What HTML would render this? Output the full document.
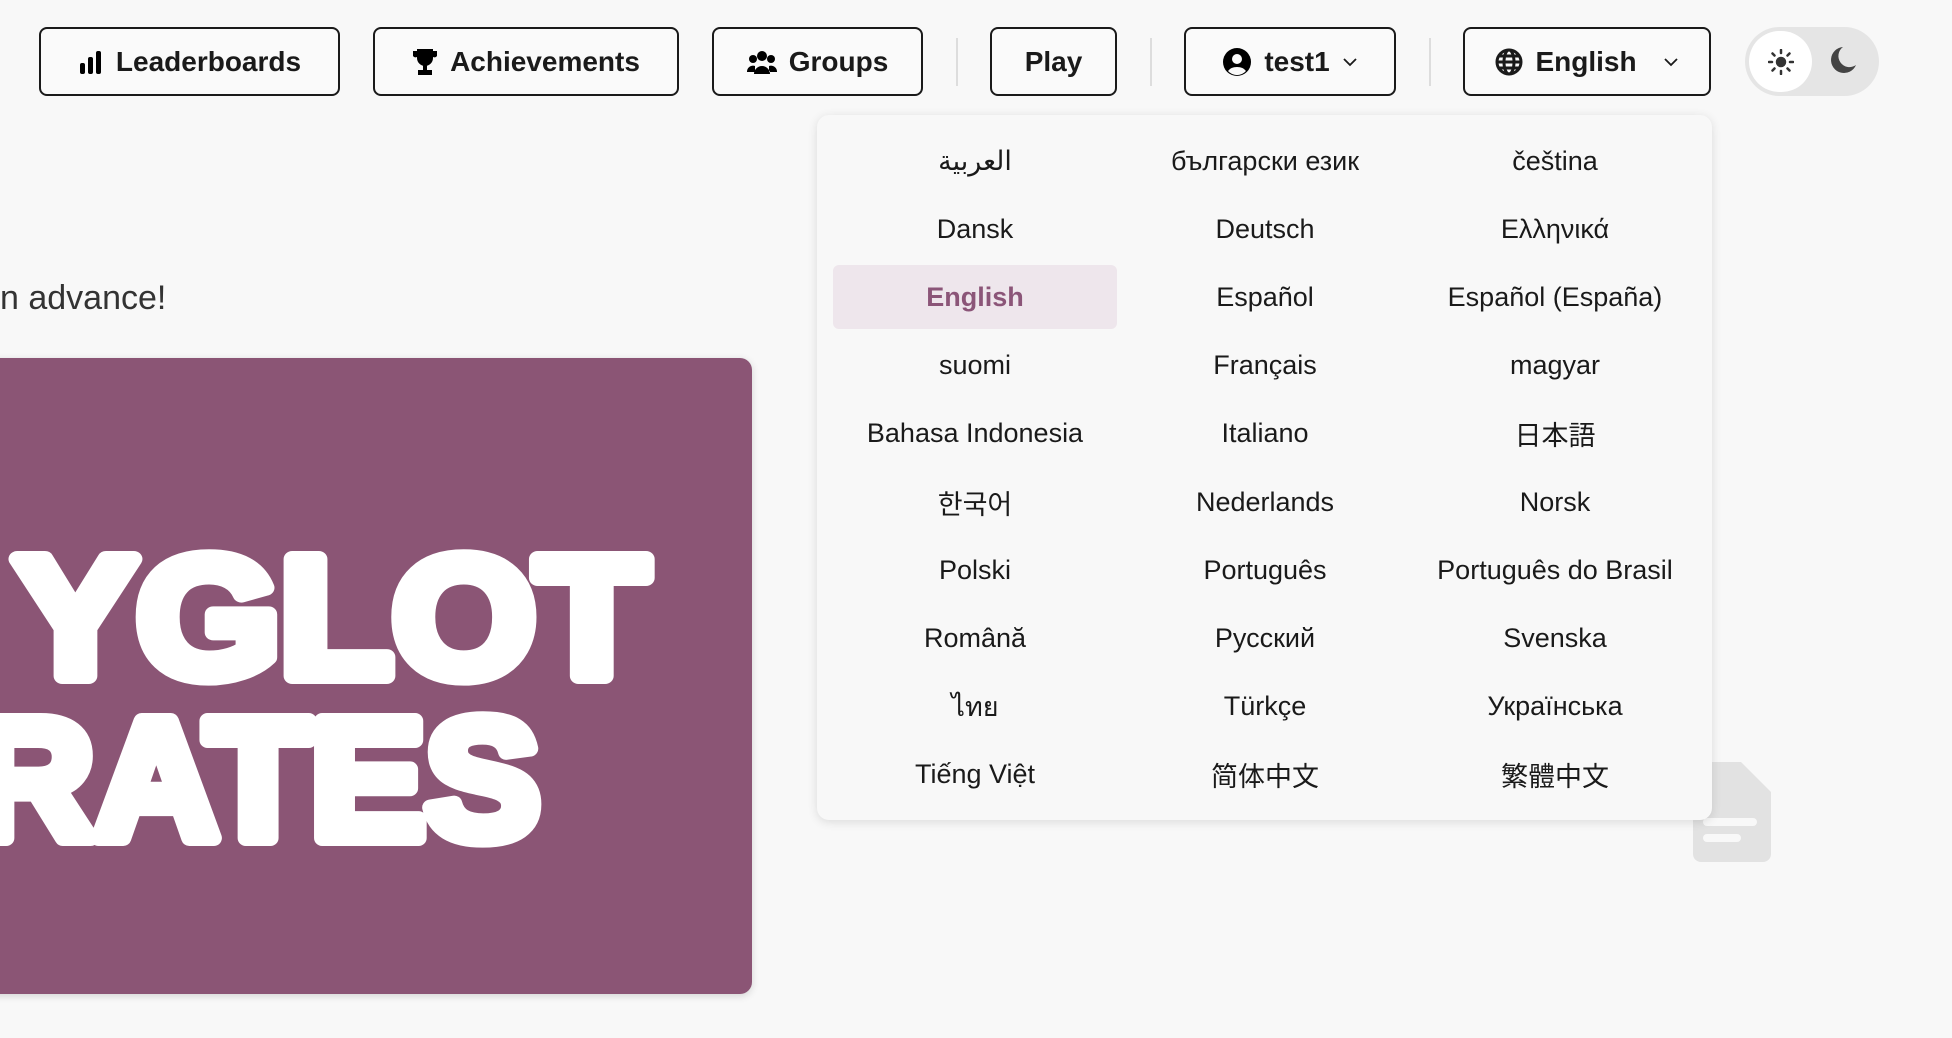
<!DOCTYPE html>
<html><head><meta charset="utf-8">
<style>
*{box-sizing:border-box;margin:0;padding:0}
body{width:1952px;height:1038px;background:#f8f8f8;font-family:"Liberation Sans","Noto Sans CJK JP",sans-serif;color:#1a1a1a;position:relative;overflow:hidden}
.btn{position:absolute;top:27px;height:69px;border:2.5px solid #1a1a1a;border-radius:8px;display:flex;align-items:center;justify-content:center;gap:12px;font-weight:bold;font-size:28px;background:#fafafa}
.sep{position:absolute;top:38px;width:2px;height:48px;background:#ddd}
.menu{position:absolute;left:817px;top:115px;width:895px;height:705px;background:#f8f8f8;border-radius:12px;box-shadow:0 2px 10px rgba(0,0,0,.12)}
.item{position:absolute;width:284px;height:64px;display:flex;align-items:center;justify-content:center;font-size:27px;color:#1a1a1a}
.sel{background:#eee6ec;color:#8b5578;font-weight:bold;border-radius:6px}
</style></head><body>
<div class="btn" style="left:39px;width:301px"><svg width="26" height="24" viewBox="0 0 26 24"><rect x="2" y="13" width="5" height="11" rx="2"/><rect x="10" y="7" width="5" height="17" rx="2"/><rect x="18" y="1" width="5" height="23" rx="2"/></svg>Leaderboards</div>
<div class="btn" style="left:373px;width:306px"><svg width="26" height="28" viewBox="0 0 26 28"><path d="M5 1h16v9a8 8 0 0 1-16 0z M1 3h5v5a3 3 0 0 1-5 0z M20 3h5v5a3 3 0 0 1-5 0z M11 17h4v5h-4z M6 22h14v5H6z"/></svg>Achievements</div>
<div class="btn" style="left:712px;width:211px"><svg width="30" height="24" viewBox="0 0 30 24"><circle cx="15" cy="6" r="5"/><circle cx="6" cy="9" r="4"/><circle cx="24" cy="9" r="4"/><path d="M7 24a8 8 0 0 1 16 0z M0 22a6 6 0 0 1 8-6v6z M30 22a6 6 0 0 0-8-6v6z"/></svg>Groups</div>
<div class="sep" style="left:956px"></div>
<div class="btn" style="left:990px;width:127px">Play</div>
<div class="sep" style="left:1150px"></div>
<div class="btn" style="left:1184px;width:212px"><svg width="30" height="30" viewBox="0 0 30 30"><circle cx="15" cy="15" r="14"/><circle cx="15" cy="12" r="5" fill="#fafafa"/><path d="M6 24a10 7 0 0 1 18 0a12 12 0 0 1-18 0z" fill="#fafafa"/></svg>test1<svg width="16" height="10" viewBox="0 0 16 10" fill="none" stroke="#1a1a1a" stroke-width="1.8"><path d="M2 2l6 6 6-6"/></svg></div>
<div class="sep" style="left:1429px"></div>
<div class="btn" style="left:1463px;width:248px"><svg width="28" height="28" viewBox="0 0 28 28" fill="none" stroke="#1a1a1a" stroke-width="3"><circle cx="14" cy="14" r="12"/><ellipse cx="14" cy="14" rx="5" ry="12"/><path d="M2 14h24M4 8h20M4 20h20"/></svg>English<svg style="margin-left:14px" width="16" height="10" viewBox="0 0 16 10" fill="none" stroke="#1a1a1a" stroke-width="1.8"><path d="M2 2l6 6 6-6"/></svg></div>
<div style="position:absolute;left:1745px;top:27px;width:134px;height:69px;border-radius:35px;background:#e5e5e5">
<div style="position:absolute;left:4px;top:4px;width:63px;height:61px;border-radius:31px;background:#fff;display:flex;align-items:center;justify-content:center"><svg width="26" height="26" viewBox="0 0 26 26" stroke="#333" stroke-width="2.5" stroke-linecap="round"><circle cx="13" cy="13" r="4" fill="#333"/><path d="M13 1v3M13 22v3M1 13h3M22 13h3M4.5 4.5l2 2M19.5 19.5l2 2M4.5 21.5l2-2M19.5 6.5l2-2"/></svg></div>
<svg style="position:absolute;left:84px;top:19px" width="28" height="30" viewBox="0 0 28 30"><path d="M14 1a13 13 0 1 0 13 18a11 11 0 0 1-13-18z" fill="#444"/></svg>
</div>
<div style="position:absolute;left:0;top:279px;font-size:34px;color:#333">n advance!</div>
<div style="position:absolute;left:-20px;top:358px;width:772px;height:636px;background:#8b5575;border-radius:12px;box-shadow:0 2px 8px rgba(0,0,0,.15)"></div>
<svg style="position:absolute;left:0;top:358px" width="752" height="636"><g fill="#fff" stroke="#fff" stroke-width="16" stroke-linejoin="round" font-family="Liberation Sans" font-weight="bold" font-size="170"><text x="14" y="318" textLength="634" lengthAdjust="spacingAndGlyphs">YGLOT</text><text x="-30" y="480" textLength="570" lengthAdjust="spacingAndGlyphs">RATES</text></g></svg>
<svg style="position:absolute;left:1693px;top:762px" width="78" height="100" viewBox="0 0 78 100"><path d="M8 0h40l30 30v62a8 8 0 0 1-8 8H8a8 8 0 0 1-8-8V8a8 8 0 0 1 8-8z" fill="#e2e2e2"/><path d="M14 60h46M14 76h30" stroke="#f8f8f8" stroke-width="8" stroke-linecap="round"/></svg>
<div class="menu"></div>
<div id="m"></div>
<script>
var L=["العربية","български език","čeština","Dansk","Deutsch","Ελληνικά","English","Español","Español (España)","suomi","Français","magyar","Bahasa Indonesia","Italiano","日本語","한국어","Nederlands","Norsk","Polski","Português","Português do Brasil","Română","Русский","Svenska","ไทย","Türkçe","Українська","Tiếng Việt","简体中文","繁體中文"];
var h="";L.forEach(function(t,i){var r=Math.floor(i/3),c=i%3;h+='<div class="item'+(i==6?' sel':'')+'" style="left:'+(833+c*290)+'px;top:'+(129+r*68.2)+'px">'+t+'</div>';});
document.getElementById("m").innerHTML=h;
</script>
</body></html>
